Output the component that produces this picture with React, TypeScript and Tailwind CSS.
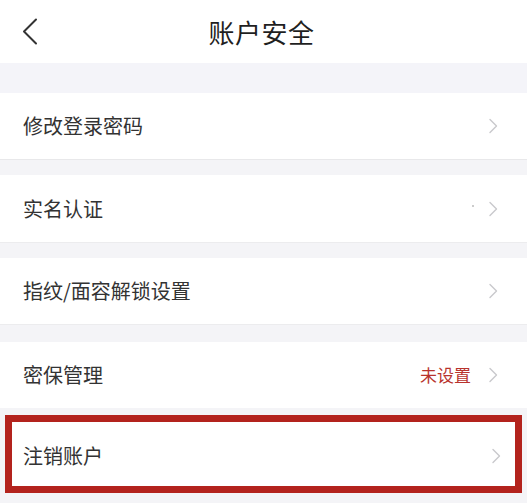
const Chevron = () => (
  <svg width="10" height="16" viewBox="0 0 10 16" className="shrink-0">
    <polyline points="2,1.5 8.5,8 2,14.5" fill="none" stroke="#c9c9cc" strokeWidth="1.4" strokeLinecap="round" strokeLinejoin="round" />
  </svg>
);

type RowProps = {
  label: string;
  extra?: React.ReactNode;
  className?: string;
};

const Row = ({ label, extra, className = "" }: RowProps) => (
  <div className={`flex items-center bg-white pl-[23px] pr-[29px] ${className}`}>
    <span className="flex-1 text-[20px] text-[#333]">{label}</span>
    {extra}
    <Chevron />
  </div>
);

export default function App() {
  return (
    <div
      className="w-[527px] h-[503px] overflow-hidden bg-[#f4f4f7]"
      style={{ fontFamily: '"Noto Sans CJK SC", "Noto Sans", sans-serif' }}
    >
      {/* Header */}
      <div className="grid h-[63px] grid-cols-[1fr_auto_1fr] items-center bg-white">
        <div className="pl-[22px]">
          <svg width="16" height="27" viewBox="0 0 16 27">
            <polyline points="14,1.5 2,13.5 14,25.5" fill="none" stroke="#333" strokeWidth="2" strokeLinecap="round" strokeLinejoin="round" />
          </svg>
        </div>
        <h1 className="pr-[4px] text-[26px] font-normal text-[#1f1f1f] tracking-[0.5px]">账户安全</h1>
        <div />
      </div>

      <div className="h-[30px] bg-[#f4f4f9]" />
      <Row label="修改登录密码" className="h-[67px] border-b border-[#e8e8ea]" />

      <div className="h-[15px]" />
      <Row
        label="实名认证"
        className="h-[68px] border-b border-[#ececee]"
        extra={<span className="mr-[14px] mb-[6px] h-[2px] w-[2px] rounded-full bg-[#bbb]" />}
      />

      <div className="h-[15px]" />
      <Row label="指纹/面容解锁设置" className="h-[67px] border-b border-[#ececee]" />

      <div className="h-[17px]" />
      <Row
        label="密保管理"
        className="h-[66px]"
        extra={<span className="mr-[17px] text-[17px] text-[#b8332d]">未设置</span>}
      />

      <div className="h-[7px]" />
      <div className="mx-[5px] border-[7px] border-[#b3231d]">
        <div className="flex h-[64px] items-center bg-white pt-[4px] pl-[11px] pr-[14px]">
          <span className="flex-1 text-[20px] text-[#333]">注销账户</span>
          <Chevron />
        </div>
      </div>
    </div>
  );
}
